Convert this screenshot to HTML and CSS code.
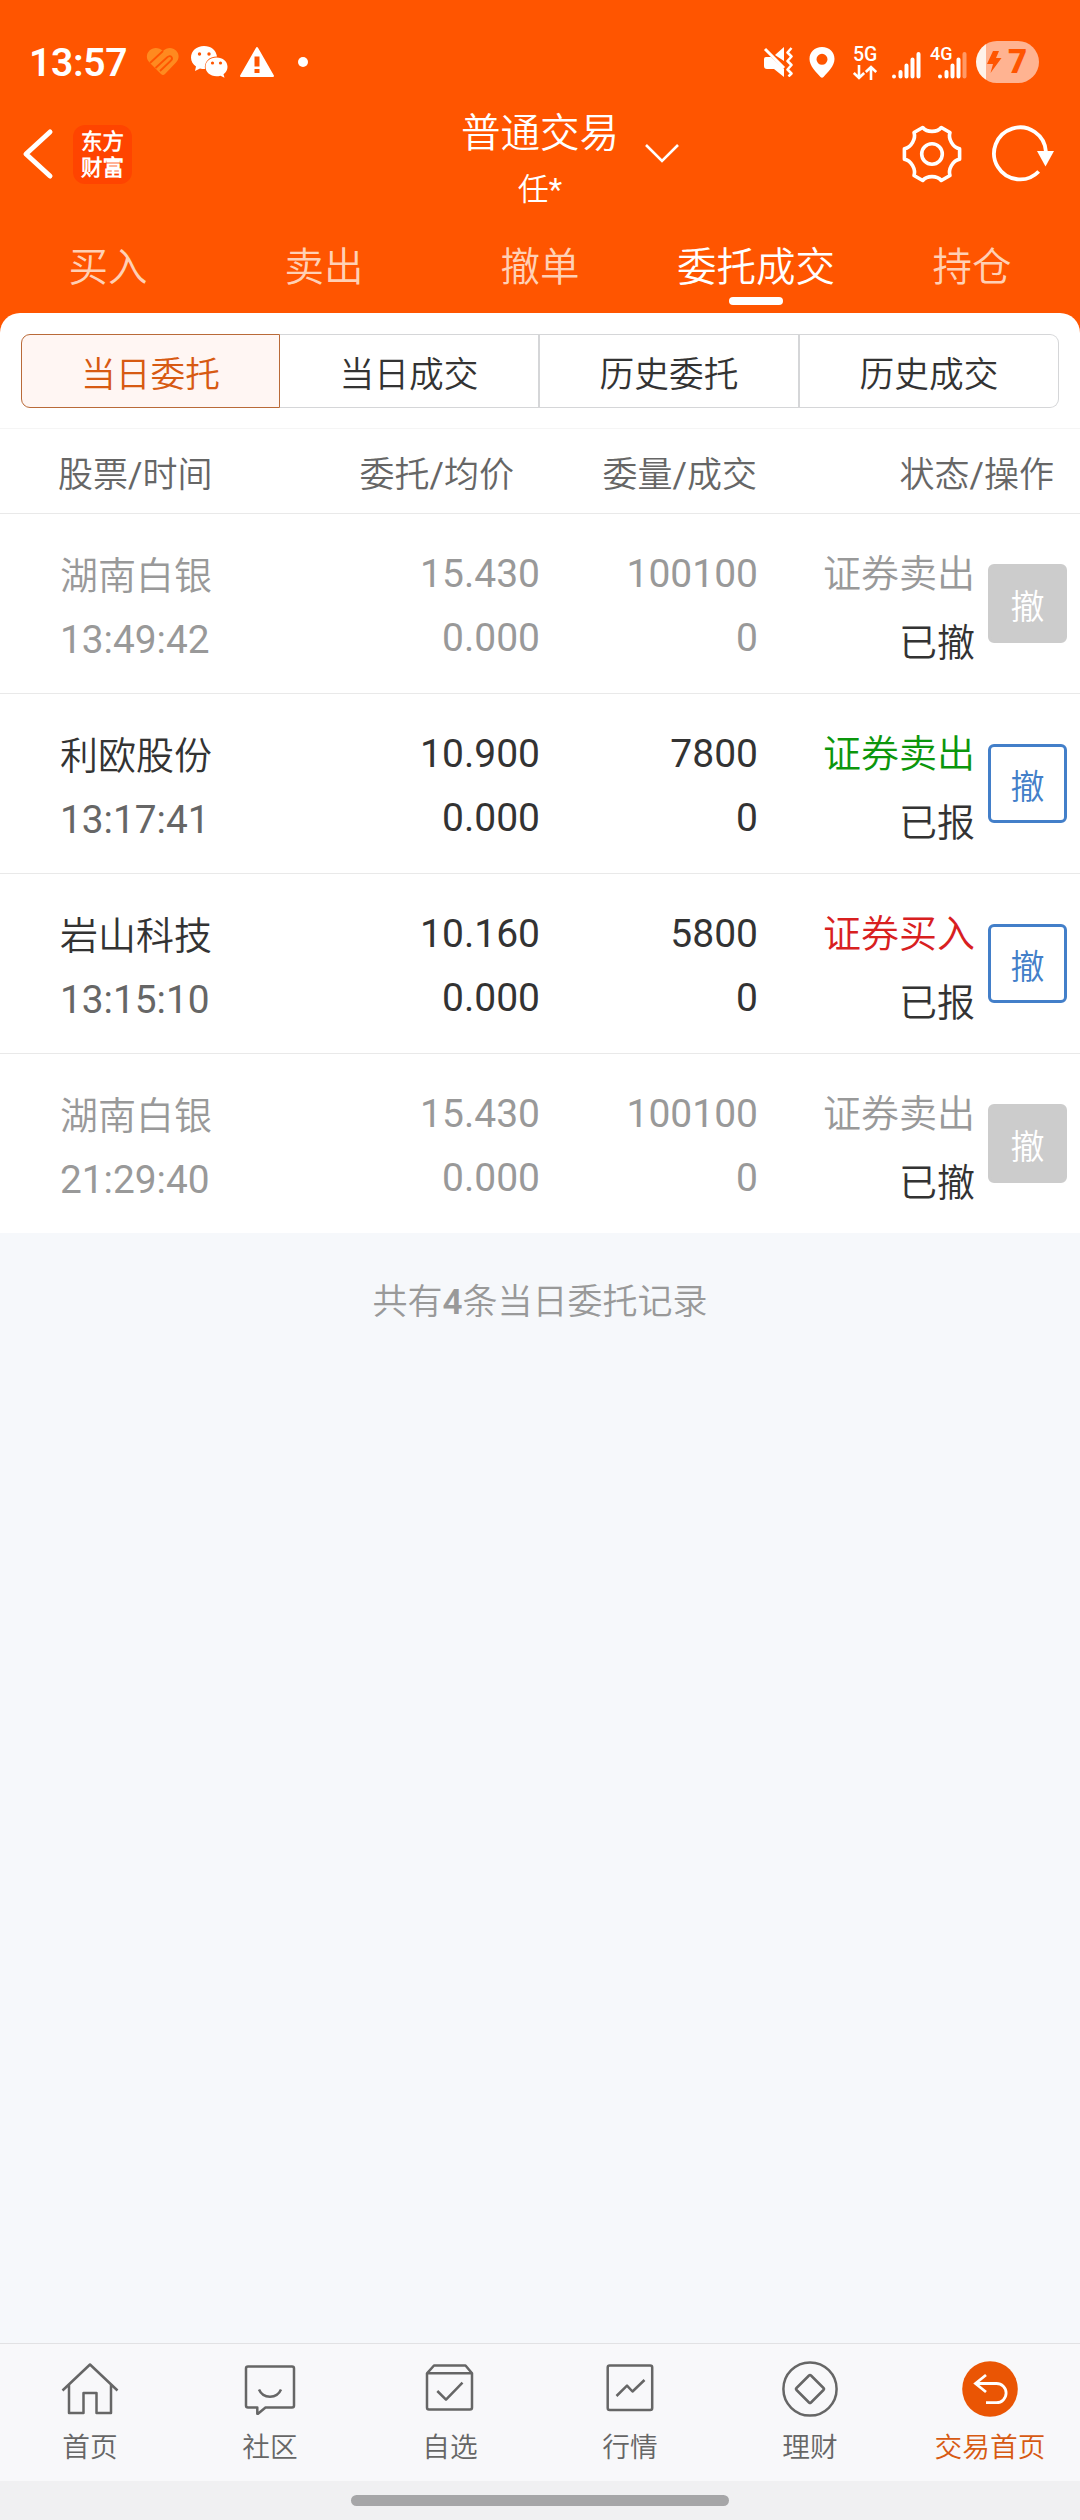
FILE: index.html
```html
<!DOCTYPE html>
<html lang="zh-CN">
<head>
    <meta charset="UTF-8">
    <meta name="viewport" content="width=device-width, initial-scale=1.0">
    <title>普通交易</title>
    <link rel="stylesheet" href="styles.css">
</head>
<body>

<div class="header">
    <!-- Status bar -->
    <div class="status-bar">
        <span class="clock">13:57</span>
        <svg class="ic-heart" width="34" height="30" viewBox="0 0 34 30">
            <path fill="#ff8a1f" d="M17 4C13 0 7 0 3.500 3.500 0 7 0 12 3.500 15.500L15 27q2 2 4 0L30 15.500C33.500 12 33.500 7 30 3.500 26.500 0 21 0 17 4z"/>
            <path fill="none" stroke="#ff5500" stroke-width="1.800" d="M4 16L17 4M9.500 21L21 10.500q3-2.500 4.500-.5t-1 4L14 24"/>
        </svg>
        <svg class="ic-wechat" width="38" height="32" viewBox="0 0 38 32">
            <path fill="#fff" d="M13 0C5.500 0 0 5 0 11.500c0 4 2 7 5 9L4 25l5-2.500q2 .6 5 .6C13 16 18 10.500 26 10.500 25 4 20 0 13 0z"/>
            <path fill="#fff" d="M25.500 11.500c-6.500 0-11 4-11 9.300s4.500 9.400 11 9.400q2 0 4-.5l4 2-1-3.500c2.600-1.800 4-4.300 4-7.400 0-5.300-4.500-9.300-11-9.300z"/>
            <g fill="#ff5500"><circle cx="8.500" cy="8" r="1.700"/><circle cx="18" cy="8" r="1.700"/><circle cx="21.500" cy="17" r="1.600"/><circle cx="29.500" cy="17" r="1.600"/></g>
        </svg>
        <svg class="ic-warn" width="36" height="32" viewBox="0 0 36 32">
            <path fill="#fff" stroke="#fff" stroke-width="2" stroke-linejoin="round" d="M18 2L34 30H2z"/>
            <path fill="#ff5500" d="M15.500 10.500h5v10h-5zM15.500 23h5v4h-5z"/>
        </svg>
        <span class="dot"></span>

        <div class="status-right">
            <svg width="30" height="30" viewBox="0 0 30 30">
                <path fill="#fff" d="M12 8L21 0v14zM1 12q0-2 2-2h5l13 12v8l-10-8H4q-3 0-3-3z"/>
                <path fill="none" stroke="#fff" stroke-width="3" d="M2 2l19 19"/>
                <path fill="none" stroke="#fff" stroke-width="2.500" stroke-linejoin="round" d="M28.500 1l-4 4.500 4 4-4 4.500 4 4-4 4.500 4 4-3 3"/>
            </svg>
            <svg class="ic-pin" width="26" height="31" viewBox="0 0 26 31">
                <path fill="#fff" fill-rule="evenodd" d="M13 0C5.500 0 .5 5.300.5 12 .5 19 7 25 11.500 30q1.500 1.500 3 0C19 25 25.500 19 25.500 12 25.500 5.300 20.500 0 13 0zm0 6.800a5.500 5.500 0 1 1 0 11 5.500 5.500 0 0 1 0-11z"/>
            </svg>
            <div class="net">
                <span>5G</span>
                <svg width="24" height="15" viewBox="0 0 24 15" fill="none" stroke="#fff" stroke-width="2.600">
                    <path d="M6 0v13M.8 8L6 13l5.200-5M18 15V2M12.800 7L18 2l5.200 5"/>
                </svg>
            </div>
            <svg class="ic-signal" width="29" height="28" viewBox="0 0 29 28" stroke="#fff" stroke-width="4" stroke-linecap="round">
                <path d="M2 25.500v.1M8.500 21v4.500M14.500 14.500v11M20.500 8.500v17M26.500 3v22.500"/>
            </svg>
            <div class="signal-4g">
                <span class="label-4g">4G</span>
                <svg width="29" height="28" viewBox="0 0 29 28" stroke="#fff" stroke-width="4" stroke-linecap="round">
                    <path d="M2 25.500v.1M8.500 21v4.500M14.500 14.500v11M20.500 8.500v17"/>
                    <path d="M26.500 3v22.500" stroke="#ff9966"/>
                </svg>
            </div>
            <div class="battery">
                <svg width="16" height="22" viewBox="0 0 16 22"><path fill="#ff5500" d="M7 0h6l-3 7h5.500L4.500 22 7 13H1z"/></svg>
                <span>7</span>
            </div>
        </div>
    </div>

    <!-- Title bar -->
    <div class="title-bar">
        <svg class="ic-back" width="32" height="52" viewBox="0 0 32 52" fill="none" stroke="#fff" stroke-width="5" stroke-linecap="round" stroke-linejoin="round">
            <path d="M28 4L4 26l24 22"/>
        </svg>
        <div class="logo"><span>东方</span><span>财富</span></div>
        <div class="title">
            <h1>普通交易</h1>
            <p>任*</p>
        </div>
        <svg class="ic-down" width="34" height="20" viewBox="0 0 34 20" fill="none" stroke="#fff" stroke-width="2.600">
            <path d="M1 1l16 16L33 1"/>
        </svg>
        <svg class="ic-gear" width="60" height="60" viewBox="-30 -30 60 60" fill="none" stroke="#fff" stroke-width="3.600" stroke-linejoin="round">
            <path d="M-9.300-26.500C-5-21.300 5-21.300 9.300-26.500L18-21.500C16-15.500 20.500-6.500 27.600-5.200V5.200C20.500 6.500 16 15.500 18 21.500L9.300 26.500C5 21.300-5 21.300-9.300 26.500L-18 21.500C-16 15.500-20.500 6.500-27.600 5.200V-5.200C-20.500-6.500-16-15.500-18-21.500z"/>
            <circle r="10.300"/>
        </svg>
        <svg class="ic-refresh" width="64" height="60" viewBox="-30 -30 64 60">
            <path d="M18.700 17.500A26 26 0 1 1 26-2" fill="none" stroke="#fff" stroke-width="3.800"/>
            <path fill="#fff" d="M17-3h17L25.500 12.500z"/>
        </svg>
    </div>

    <!-- Main tabs -->
    <div class="tabs">
        <span>买入</span>
        <span>卖出</span>
        <span>撤单</span>
        <span class="active">委托成交</span>
        <span>持仓</span>
    </div>
</div>

<div class="panel">
    <div class="sub-tabs">
        <span class="active">当日委托</span>
        <span>当日成交</span>
        <span>历史委托</span>
        <span>历史成交</span>
    </div>

    <div class="list-head">
        <span>股票/时间</span>
        <span>委托/均价</span>
        <span>委量/成交</span>
        <span>状态/操作</span>
    </div>

    <div class="row cancelled">
        <div class="stock">湖南白银<br><span class="time">13:49:42</span></div>
        <div class="num">15.430<br>0.000</div>
        <div class="num">100100<br>0</div>
        <div class="state"><span class="side">证券卖出</span><br>已撤</div>
        <button>撤</button>
    </div>
    <div class="row">
        <div class="stock">利欧股份<br><span class="time">13:17:41</span></div>
        <div class="num">10.900<br>0.000</div>
        <div class="num">7800<br>0</div>
        <div class="state"><span class="side sell">证券卖出</span><br>已报</div>
        <button>撤</button>
    </div>
    <div class="row">
        <div class="stock">岩山科技<br><span class="time">13:15:10</span></div>
        <div class="num">10.160<br>0.000</div>
        <div class="num">5800<br>0</div>
        <div class="state"><span class="side buy">证券买入</span><br>已报</div>
        <button>撤</button>
    </div>
    <div class="row cancelled">
        <div class="stock">湖南白银<br><span class="time">21:29:40</span></div>
        <div class="num">15.430<br>0.000</div>
        <div class="num">100100<br>0</div>
        <div class="state"><span class="side">证券卖出</span><br>已撤</div>
        <button>撤</button>
    </div>
</div>

<div class="summary">共有<b>4</b>条当日委托记录</div>

<!-- Bottom navigation -->
<div class="bottom-nav">
    <div class="nav-item">
        <svg width="60" height="60" viewBox="0 0 60 60">
            <path d="M2.500 30.500L30 4.500l27.500 26M9 25v28h14.500V33h13v20H51V25"/>
        </svg>
        <span>首页</span>
    </div>
    <div class="nav-item">
        <svg width="60" height="60" viewBox="0 0 60 60">
            <path d="M8 6.500h44q2 0 2 2v37q0 2-2 2H25.500L18 53.700h-.7v-6.200H8q-2 0-2-2v-37q0-2 2-2zM19 29.500c4 9.500 18 9.500 22 0"/>
        </svg>
        <span>社区</span>
    </div>
    <div class="nav-item">
        <svg width="60" height="60" viewBox="0 0 60 60">
            <path d="M7 13.300h45V47.500q0 2-2 2H9q-2 0-2-2V13.300l7-7.800h31.500l6.500 7.800M17.300 31l8.700 8.700 16.500-17"/>
        </svg>
        <span>自选</span>
    </div>
    <div class="nav-item">
        <svg width="60" height="60" viewBox="0 0 60 60">
            <rect x="7.700" y="5.500" width="44.500" height="44.500" rx="2"/>
            <path d="M16.500 36L27 25.700l5.500 5.800L44.500 20"/>
        </svg>
        <span>行情</span>
    </div>
    <div class="nav-item">
        <svg width="60" height="60" viewBox="0 0 60 60">
            <circle cx="30" cy="29" r="26.600"/>
            <path d="M29 15.500q1-1 2 0L43.500 28q1 1 0 2L31 42.500q-1 1-2 0L16.500 30q-1-1 0-2z"/>
        </svg>
        <span>理财</span>
    </div>
    <div class="nav-item active">
        <svg width="60" height="60" viewBox="0 0 60 60">
            <circle class="disc" cx="30" cy="29" r="27.800"/>
            <path class="arrow" d="M26 15L15.500 23.500 26 32M15 23.500h21.500a9.600 9.600 0 0 1 0 19.200H26"/>
        </svg>
        <span>交易首页</span>
    </div>
</div>
<div class="gesture-bar"><div class="pill"></div></div>

</body>
</html>
```
FILE: styles.css
```css
* {
    box-sizing: border-box;
}
body {
    margin: 0;
    width: 1080px;
    height: 2520px;
    display: flex;
    flex-direction: column;
    background-color: #f6f8fb;
    font-family: Roboto, "Noto Sans CJK SC DemiLight", "Noto Sans CJK SC", sans-serif;
    color: #333;
}
svg {
    display: block;
    flex-shrink: 0;
}

/* Header */
.header {
    height: 337px;
    margin-bottom: -24px;
    background-color: #ff5500;
    color: #fff;
    flex-shrink: 0;
}
.status-bar {
    display: flex;
    align-items: center;
    height: 124px;
    padding: 0 41px 0 29px;
}
.clock {
    width: 117px;
    padding-top: 1px;
    font-size: 39px;
    font-weight: 600;
    letter-spacing: -0.3px;
    line-height: 46px;
}
.ic-wechat {
    margin-left: 11px;
}
.ic-warn {
    margin-left: 10px;
}
.dot {
    width: 10px;
    height: 10px;
    margin-left: 23px;
    border-radius: 50%;
    background-color: #fff;
}
.status-right {
    display: flex;
    align-items: center;
    margin-left: auto;
}
.ic-pin {
    margin-left: 16px;
}
.net {
    width: 24px;
    margin: 2px 0 0 18px;
    font-size: 19.5px;
    font-weight: 500;
    line-height: 18px;
}
.net svg {
    margin-top: 1px;
}
.ic-signal {
    margin: 5px 0 0 15px;
}
.signal-4g {
    position: relative;
    margin: 5px 9px 0 17px;
}
.label-4g {
    position: absolute;
    left: -8px;
    top: -6px;
    font-size: 18px;
    font-weight: 500;
    line-height: 18px;
}
.battery {
    display: flex;
    align-items: center;
    width: 63px;
    height: 42px;
    padding-left: 10px;
    border-radius: 21px;
    background: linear-gradient(to right, #fff2ea 10px, #ffb391 10px);
    color: #ff5500;
    font-size: 33px;
    font-weight: 900;
    line-height: 42px;
}
.battery span {
    margin-left: 6px;
}

.title-bar {
    display: flex;
    align-items: center;
    height: 60px;
    padding-left: 22px;
}
.logo {
    display: flex;
    flex-direction: column;
    gap: 4px;
    width: 59px;
    height: 59px;
    margin-left: 19px;
    padding-top: 6px;
    border-radius: 12px;
    background-color: #ff4400;
    font-size: 21.5px;
    font-weight: 700;
    line-height: 22px;
    text-align: center;
}
.title {
    width: 160px;
    margin-left: 328px;
    padding-top: 13px;
    text-align: center;
}
.title h1 {
    margin: 0;
    font-size: 39.5px;
    font-weight: 400;
    line-height: 58px;
}
.title p {
    margin: 0;
    font-size: 31px;
    line-height: 54px;
}
.ic-down {
    margin-left: 25px;
}
.ic-gear {
    margin-left: 223px;
}
.ic-refresh {
    margin-left: 28px;
}

.tabs {
    display: flex;
    height: 129px;
}
.tabs span {
    flex: 1;
    padding-top: 56px;
    color: #ffd0b5;
    font-size: 39.5px;
    line-height: 56px;
    text-align: center;
}
.tabs .active {
    color: #fff;
}
.tabs .active::after {
    content: "";
    display: block;
    width: 54px;
    height: 8px;
    margin: 1px auto 0;
    border-radius: 4px;
    background-color: #fff;
}

/* Order list */
.panel {
    padding-top: 21px;
    border-radius: 20px 20px 0 0;
    background-color: #fff;
}
.sub-tabs {
    display: grid;
    grid-template-columns: 259px 260px 260px 259px;
    grid-template-rows: 74px;
    width: 1038px;
    height: 74px;
    margin: 0 auto 20px;
}
.sub-tabs span {
    padding-top: 4px;
    border: 1px solid #d5d6d8;
    border-left-width: 0;
    border-right-width: 2px;
    font-size: 34.7px;
    line-height: 72px;
    text-align: center;
}
.sub-tabs span:last-child {
    border-right-width: 1px;
    border-radius: 0 9px 9px 0;
}
.sub-tabs .active {
    border: 1px solid #b96a38;
    border-radius: 9px 0 0 9px;
    background-color: #fff6f3;
    color: #d75a12;
}
.list-head {
    display: grid;
    grid-template-columns: 276px 180px 243px 297px;
    height: 86px;
    padding-left: 58px;
    border-top: 1px solid #f5f5f5;
    border-bottom: 1px solid #e9e9e9;
    color: #666;
    font-size: 35px;
    line-height: 93px;
    text-align: right;
}
.list-head span:first-child {
    text-align: left;
}
.row {
    display: grid;
    grid-template-columns: 300px 180px 218px 217px 92px;
    height: 180px;
    padding-left: 60px;
    border-bottom: 1px solid #e9e9e9;
    font-size: 38px;
    text-align: right;
}
.row:last-child {
    height: 179px;
    border-bottom: none;
}
.stock {
    padding-top: 30px;
    line-height: 64px;
    text-align: left;
}
.time {
    color: #666;
    font-size: 38.8px;
}
.num {
    padding-top: 28px;
    font-size: 39px;
    line-height: 64px;
}
.state {
    padding-top: 26px;
    line-height: 69px;
}
.sell {
    color: #0c960c;
}
.buy {
    color: #d8201f;
}
.row button {
    justify-self: end;
    width: 79px;
    height: 79px;
    margin-top: 50px;
    padding: 2px 0 0;
    border: 3px solid #437fc9;
    border-radius: 6px;
    background-color: #fff;
    color: #437fc9;
    font-family: inherit;
    font-size: 34px;
}
.cancelled .stock,
.cancelled .time,
.cancelled .num,
.cancelled .side {
    color: #999;
}
.cancelled button {
    border-color: #ccc;
    background-color: #ccc;
    color: #fff;
}
.summary {
    padding-top: 43px;
    color: #999;
    font-size: 35px;
    line-height: 54px;
    text-align: center;
}
.summary b {
    font-weight: 600;
}

/* Bottom navigation */
.bottom-nav {
    display: flex;
    height: 138px;
    margin-top: auto;
    border-top: 1px solid #e2e2e4;
    background-color: #f8f8fa;
    color: #666;
}
.nav-item {
    flex: 1;
    display: flex;
    flex-direction: column;
    align-items: center;
    padding-top: 16px;
    font-size: 27.7px;
    line-height: 36px;
}
.nav-item span {
    margin-top: 10px;
}
.nav-item svg {
    fill: none;
    stroke: #666;
    stroke-width: 2.5;
    stroke-linejoin: round;
}
.nav-item.active {
    color: #d75a12;
}
.nav-item .disc {
    fill: #ea5504;
    stroke: none;
}
.nav-item .arrow {
    stroke: #fff;
    stroke-width: 2.8;
    stroke-linejoin: miter;
}
.gesture-bar {
    height: 39px;
    padding-top: 14px;
    background-color: #f0f0f2;
    flex-shrink: 0;
}
.pill {
    width: 378px;
    height: 11px;
    margin: 0 auto;
    border-radius: 6px;
    background-color: #a6a6a8;
}
```
